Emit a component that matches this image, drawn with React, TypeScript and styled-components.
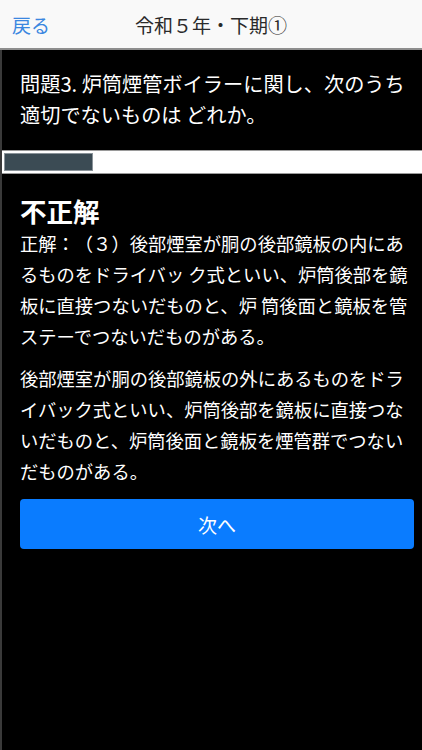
import styled, { createGlobalStyle } from 'styled-components';

const GlobalStyle = createGlobalStyle`
    html, body {
        margin: 0;
        padding: 0;
        background: #000;
    }
    body {
        font-family: "Noto Sans CJK JP", "Open Sans", sans-serif;
        text-spacing-trim: space-all;
    }
`;

const question = '問題3. 炉筒煙管ボイラーに関し、次のうち適切でないものは どれか。';
const answer =
    '正解：（３）後部煙室が胴の後部鏡板の内にあるものをドライバッ ク式といい、炉筒後部を鏡板に直接つないだものと、炉 筒後面と鏡板を管ステーでつないだものがある。';
const explanation =
    '後部煙室が胴の後部鏡板の外にあるものをドライバック式といい、炉筒後部を鏡板に直接つないだものと、炉筒後面と鏡板を煙管群でつないだものがある。';

export default function App() {
    const progress = 21.5;

    return (
        <>
            <GlobalStyle />
            <Screen>
                <NavBar>
                    <BackButton>戻る</BackButton>
                    <NavTitle>令和５年・下期①</NavTitle>
                </NavBar>
                <Body>
                    <Question>{question}</Question>
                    <ProgressTrack>
                        <ProgressFill style={{ width: `${progress}%` }} />
                    </ProgressTrack>
                    <Result>
                        <Verdict>不正解</Verdict>
                        <Paragraph>{answer}</Paragraph>
                        <Paragraph>{explanation}</Paragraph>
                        <NextButton>次へ</NextButton>
                    </Result>
                </Body>
            </Screen>
        </>
    );
}

const Screen = styled.div`
    width: 422px;
    height: 750px;
    display: flex;
    flex-direction: column;
    background: #000;
    overflow: hidden;
`;

const NavBar = styled.div`
    height: 48px;
    flex: 0 0 auto;
    position: relative;
    display: flex;
    align-items: center;
    justify-content: center;
    background: #f9f9f9;
    border-bottom: 2px solid #8e8e8e;
`;

const BackButton = styled.div`
    position: absolute;
    left: 12px;
    top: 12px;
    font-size: 19px;
    line-height: 26px;
    color: #3b87e0;
`;

const NavTitle = styled.div`
    font-size: 19px;
    line-height: 26px;
    color: #2a2a2a;
    margin-top: 1px;
`;

const Body = styled.div`
    flex: 1 0 0;
    display: flex;
    flex-direction: column;
    border-left: 2px solid #3a3a3a;
`;

const Question = styled.div`
    padding: 18px 10px 0 18px;
    height: 100px;
    box-sizing: border-box;
    font-size: 20.2px;
    line-height: 31px;
    color: #fff;
`;

const ProgressTrack = styled.div`
    height: 24px;
    box-sizing: border-box;
    padding: 2px 2px;
    background: #fff;
    border-top: 1px solid #9a9a9a;
    border-bottom: 1px solid #9a9a9a;
`;

const ProgressFill = styled.div`
    height: 100%;
    background: #3b4b54;
    border: 1px solid #8a9399;
    box-sizing: border-box;
`;

const Result = styled.div`
    display: flex;
    flex-direction: column;
    padding: 19px 8px 0 18px;
`;

const Verdict = styled.div`
    font-size: 26.5px;
    font-weight: 700;
    line-height: 35px;
    color: #fff;
`;

const Paragraph = styled.div`
    font-size: 18.3px;
    line-height: 31px;
    color: #fff;
    margin-bottom: 11px;
    text-spacing-trim: space-all;
    font-feature-settings: "chws" 0, "halt" 0;
`;

const NextButton = styled.div`
    margin-top: 1px;
    height: 50px;
    display: flex;
    align-items: center;
    justify-content: center;
    background: #0a7cff;
    border-radius: 4px;
    font-size: 19px;
    color: #fff;
`;
